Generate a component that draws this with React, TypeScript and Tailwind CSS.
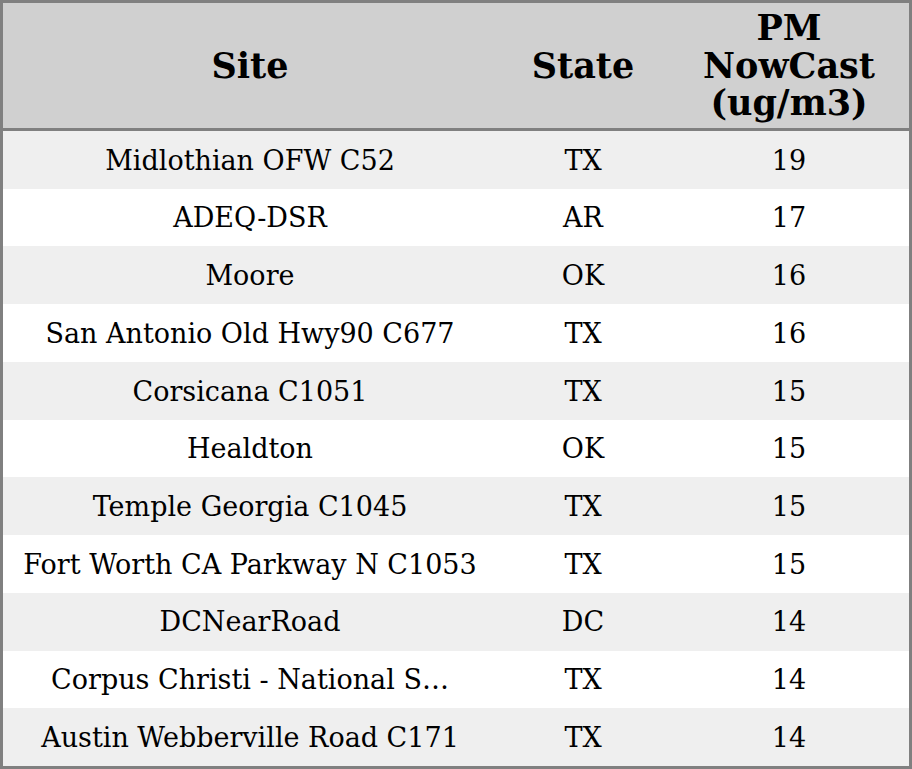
const rows = [
  { site: "Midlothian OFW C52", state: "TX", pm: 19 },
  { site: "ADEQ-DSR", state: "AR", pm: 17 },
  { site: "Moore", state: "OK", pm: 16 },
  { site: "San Antonio Old Hwy90 C677", state: "TX", pm: 16 },
  { site: "Corsicana C1051", state: "TX", pm: 15 },
  { site: "Healdton", state: "OK", pm: 15 },
  { site: "Temple Georgia C1045", state: "TX", pm: 15 },
  { site: "Fort Worth CA Parkway N C1053", state: "TX", pm: 15 },
  { site: "DCNearRoad", state: "DC", pm: 14 },
  { site: "Corpus Christi - National S…", state: "TX", pm: 14 },
  { site: "Austin Webberville Road C171", state: "TX", pm: 14 },
];

export default function App() {
  return (
    <div className="w-[912px] h-[769px] bg-white font-['DejaVu_Serif',serif] text-black">
      <div className="flex flex-col h-full border-[3px] border-[#808080]">
        {/* Header */}
        <div className="grid grid-cols-[494px_172px_240px] h-[128px] bg-[#d0d0d0] border-b-[3px] border-[#808080] font-bold text-[35px] leading-[37.5px] text-center">
          <div className="flex items-center justify-center">Site</div>
          <div className="flex items-center justify-center">State</div>
          <div className="flex items-center justify-center">
            PM
            <br />
            NowCast
            <br />
            (ug/m3)
          </div>
        </div>

        {/* Rows */}
        <div className="flex-1 grid grid-rows-11 text-[27px] text-center">
          {rows.map((r, i) => (
            <div
              key={i}
              className={`grid grid-cols-[494px_172px_240px] items-center pt-[2px] ${i % 2 === 0 ? "bg-[#efefef]" : "bg-white"}`}
            >
              <div className="whitespace-nowrap">{r.site}</div>
              <div>{r.state}</div>
              <div>{r.pm}</div>
            </div>
          ))}
        </div>
      </div>
    </div>
  );
}
